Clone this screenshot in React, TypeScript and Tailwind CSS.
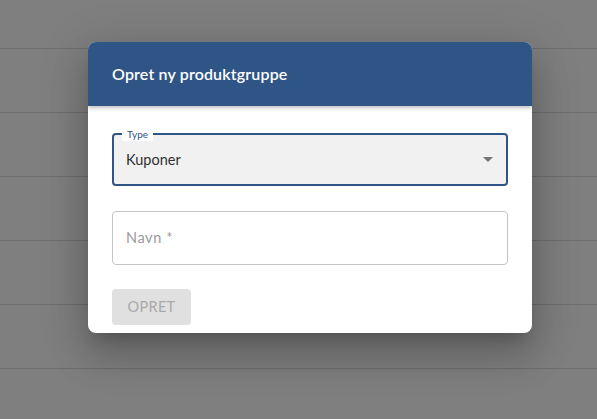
import React from 'react';

const rows = [0, 1, 2, 3, 4];

// Dialog for creating a new product group, shown over the list page
const CreateGroupDialog = () => {
  return (
    <div className="w-[444px] overflow-hidden rounded-lg bg-white shadow-[0_11px_15px_-7px_rgba(0,0,0,0.2),0_24px_38px_3px_rgba(0,0,0,0.14),0_9px_46px_8px_rgba(0,0,0,0.12)]">
      <div className="relative z-10 flex h-16 items-center bg-[#2f5586] px-6 shadow-[0_2px_4px_rgba(0,0,0,0.25)]">
        <h2 className="text-[16px] font-semibold tracking-[0.15px] text-white">Opret ny produktgruppe</h2>
      </div>

      <div className="flex flex-col px-6 pt-[27px] pb-2">
        {/* Type select */}
        <div className="relative h-[53px] rounded border-2 border-[#2f5586] bg-[#f1f1f1]">
          <span className="absolute -top-[8px] left-[8px] bg-white px-[5px] text-[10px] leading-[14px] text-[#2f5586]">Type</span>
          <div className="flex h-full items-center justify-between pr-[13px] pl-[12px]">
            <span className="text-[14.5px] text-[#303030]">Kuponer</span>
            <svg width="10" height="5" viewBox="0 0 10 5">
              <path d="M0 0 L10 0 L5 5 Z" fill="#757575" />
            </svg>
          </div>
        </div>

        {/* Name input */}
        <div className="mt-[25px] flex h-[54px] items-center rounded border border-[#c4c4c4] px-[13px]">
          <span className="text-[14.5px] tracking-[0.6px] text-[#9b9b9b]">Navn *</span>
        </div>

        <div className="mt-[24px]">
          <button className="h-9 w-[79px] rounded bg-[#e0e0e0] text-[14.5px] tracking-[0.3px] text-[#a9a9a9]">OPRET</button>
        </div>
      </div>
    </div>
  );
};

const App = () => {
  return (
    <div className="relative h-[419px] w-[597px] overflow-hidden bg-[#7f7f7f] font-['Lato',sans-serif]">
      {/* dimmed list behind the dialog */}
      <div className="flex flex-col">
        <div className="h-[49px] border-b border-[#6d6d6d]" />
        {rows.map((r) => (
          <div key={r} className="h-[64px] border-b border-[#6d6d6d]" />
        ))}
      </div>

      <div className="absolute inset-0 pt-[42px] pl-[88px]">
        <CreateGroupDialog />
      </div>
    </div>
  );
};

export default App;
